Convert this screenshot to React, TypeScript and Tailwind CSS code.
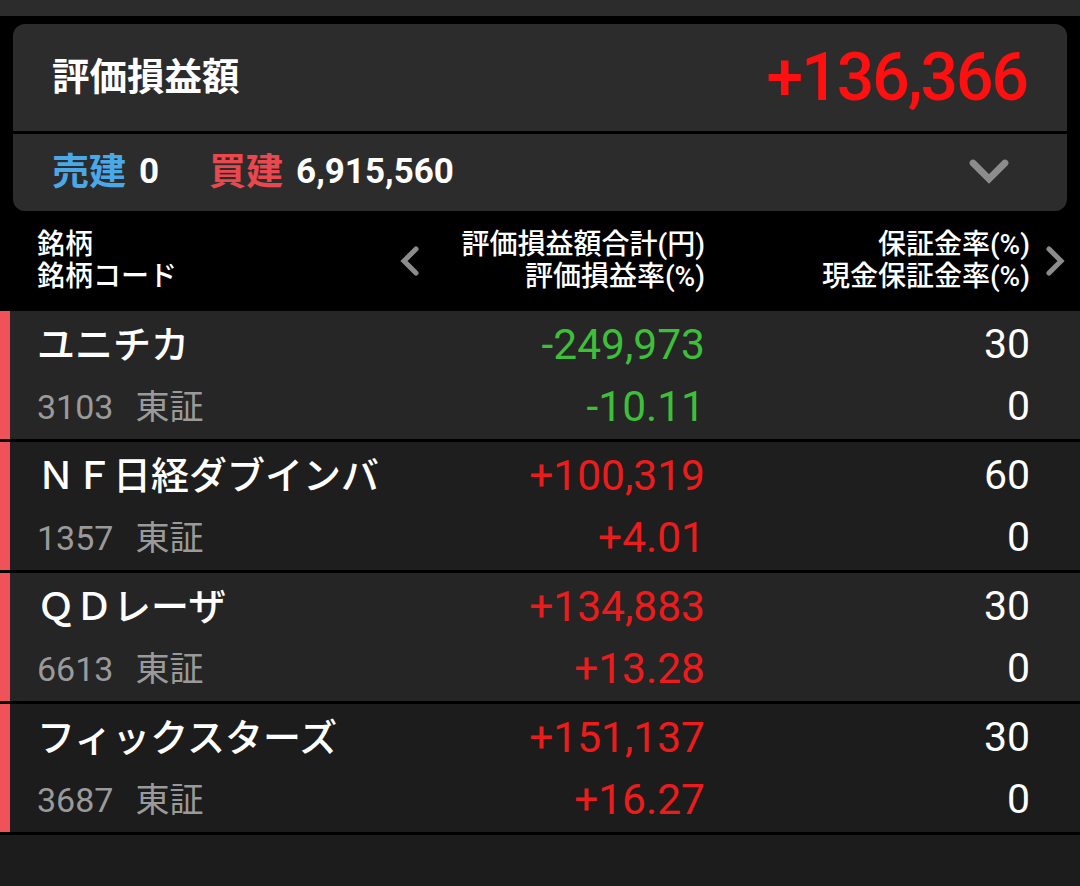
import React from 'react';

const FONT = 'font-["Roboto","Noto_Sans_CJK_JP",sans-serif]';

type Row = {
  name: string;
  code: string;
  pl: string;
  rate: string;
  margin: string;
  cash: string;
  up: boolean;
  bg: string;
};

const rows: Row[] = [
  { name: 'ユニチカ', code: '3103', pl: '-249,973', rate: '-10.11', margin: '30', cash: '0', up: false, bg: 'bg-[#262626]' },
  { name: 'ＮＦ日経ダブインバ', code: '1357', pl: '+100,319', rate: '+4.01', margin: '60', cash: '0', up: true, bg: 'bg-[#1e1e1e]' },
  { name: 'ＱＤレーザ', code: '6613', pl: '+134,883', rate: '+13.28', margin: '30', cash: '0', up: true, bg: 'bg-[#252525]' },
  { name: 'フィックスターズ', code: '3687', pl: '+151,137', rate: '+16.27', margin: '30', cash: '0', up: true, bg: 'bg-[#1c1c1c]' },
];

const Chevron: React.FC<{ dir: 'left' | 'right' | 'down'; className?: string }> = ({ dir, className }) => {
  const pts =
    dir === 'left' ? '14,4 6,12 14,20' : dir === 'right' ? '6,4 14,12 6,20' : '4,7 12,15 20,7';
  return (
    <svg viewBox="0 0 24 24" className={className} fill="none">
      <polyline points={pts} stroke="#8c8c8c" strokeWidth="3.4" strokeLinecap="round" strokeLinejoin="miter" />
    </svg>
  );
};

const StockRow: React.FC<{ row: Row }> = ({ row }) => {
  const color = row.up ? 'text-[#ec1c1c]' : 'text-[#3ebf3a]';
  return (
    <div className={`flex h-[131px] border-b-[3px] border-black ${row.bg}`}>
      <div className="w-[10px] bg-[#f0525a]" />
      <div className="flex flex-1 flex-col pl-[27px] pr-[50px]">
        <div className="flex h-[68px] items-center">
          <div className="flex-1 whitespace-nowrap text-[38px] font-medium text-white">{row.name}</div>
          <div className={`text-right text-[42.5px] ${color}`}>{row.pl}</div>
          <div className="w-[325px] text-right text-[41px] text-white">{row.margin}</div>
        </div>
        <div className="flex h-[56px] items-center">
          <div className="flex flex-1 items-center whitespace-nowrap text-[34px] text-[#9a9a9a]">
            <span>{row.code}</span>
            <span className="ml-[22px]">東証</span>
          </div>
          <div className={`text-right text-[42.5px] ${color}`}>{row.rate}</div>
          <div className="w-[325px] text-right text-[41px] text-white">{row.cash}</div>
        </div>
      </div>
    </div>
  );
};

export default function App() {
  return (
    <div className={`${FONT} flex h-[886px] w-[1080px] flex-col overflow-hidden bg-black`}>
      {/* top strip */}
      <div className="h-[16px] bg-[#2c2c2c]" />

      {/* summary card */}
      <div className="mx-[13px] mt-[8px] overflow-hidden rounded-[12px] bg-[#2c2c2c]">
        <div className="flex h-[107px] items-center justify-between pl-[39px] pr-[40px]">
          <div className="text-[37.5px] font-bold text-white">評価損益額</div>
          <div className="text-[66px] font-medium tracking-[-2px] text-[#ff1010]">+136,366</div>
        </div>
        <div className="h-[3px] bg-black" />
        <div className="flex h-[77px] items-center pl-[39px] pr-[54px]">
          <span className="text-[37px] font-bold text-[#4aa8e8]">売建</span>
          <span className="ml-[13px] text-[35px] font-bold text-white">0</span>
          <span className="ml-[50px] text-[37px] font-bold text-[#e8484e]">買建</span>
          <span className="ml-[13px] text-[35px] font-bold text-white">6,915,560</span>
          <div className="flex-1" />
          <Chevron dir="down" className="h-[48px] w-[48px]" />
        </div>
      </div>

      {/* header */}
      <div className="flex h-[100px] items-center pl-[37px] pr-[4px] text-[28px] font-medium leading-[32px] text-white">
        <div className="flex-1">
          <div>銘柄</div>
          <div>銘柄コード</div>
        </div>
        <Chevron dir="left" className="mr-[31px] h-[36px] w-[36px]" />
        <div className="text-right">
          <div>評価損益額合計(円)</div>
          <div>評価損益率(%)</div>
        </div>
        <div className="w-[325px] text-right">
          <div>保証金率(%)</div>
          <div>現金保証金率(%)</div>
        </div>
        <Chevron dir="right" className="ml-[10px] h-[36px] w-[36px]" />
      </div>

      {/* rows */}
      <div className="flex flex-1 flex-col bg-[#1c1c1c]">
        {rows.map((r) => (
          <StockRow key={r.code} row={r} />
        ))}
      </div>
    </div>
  );
}
